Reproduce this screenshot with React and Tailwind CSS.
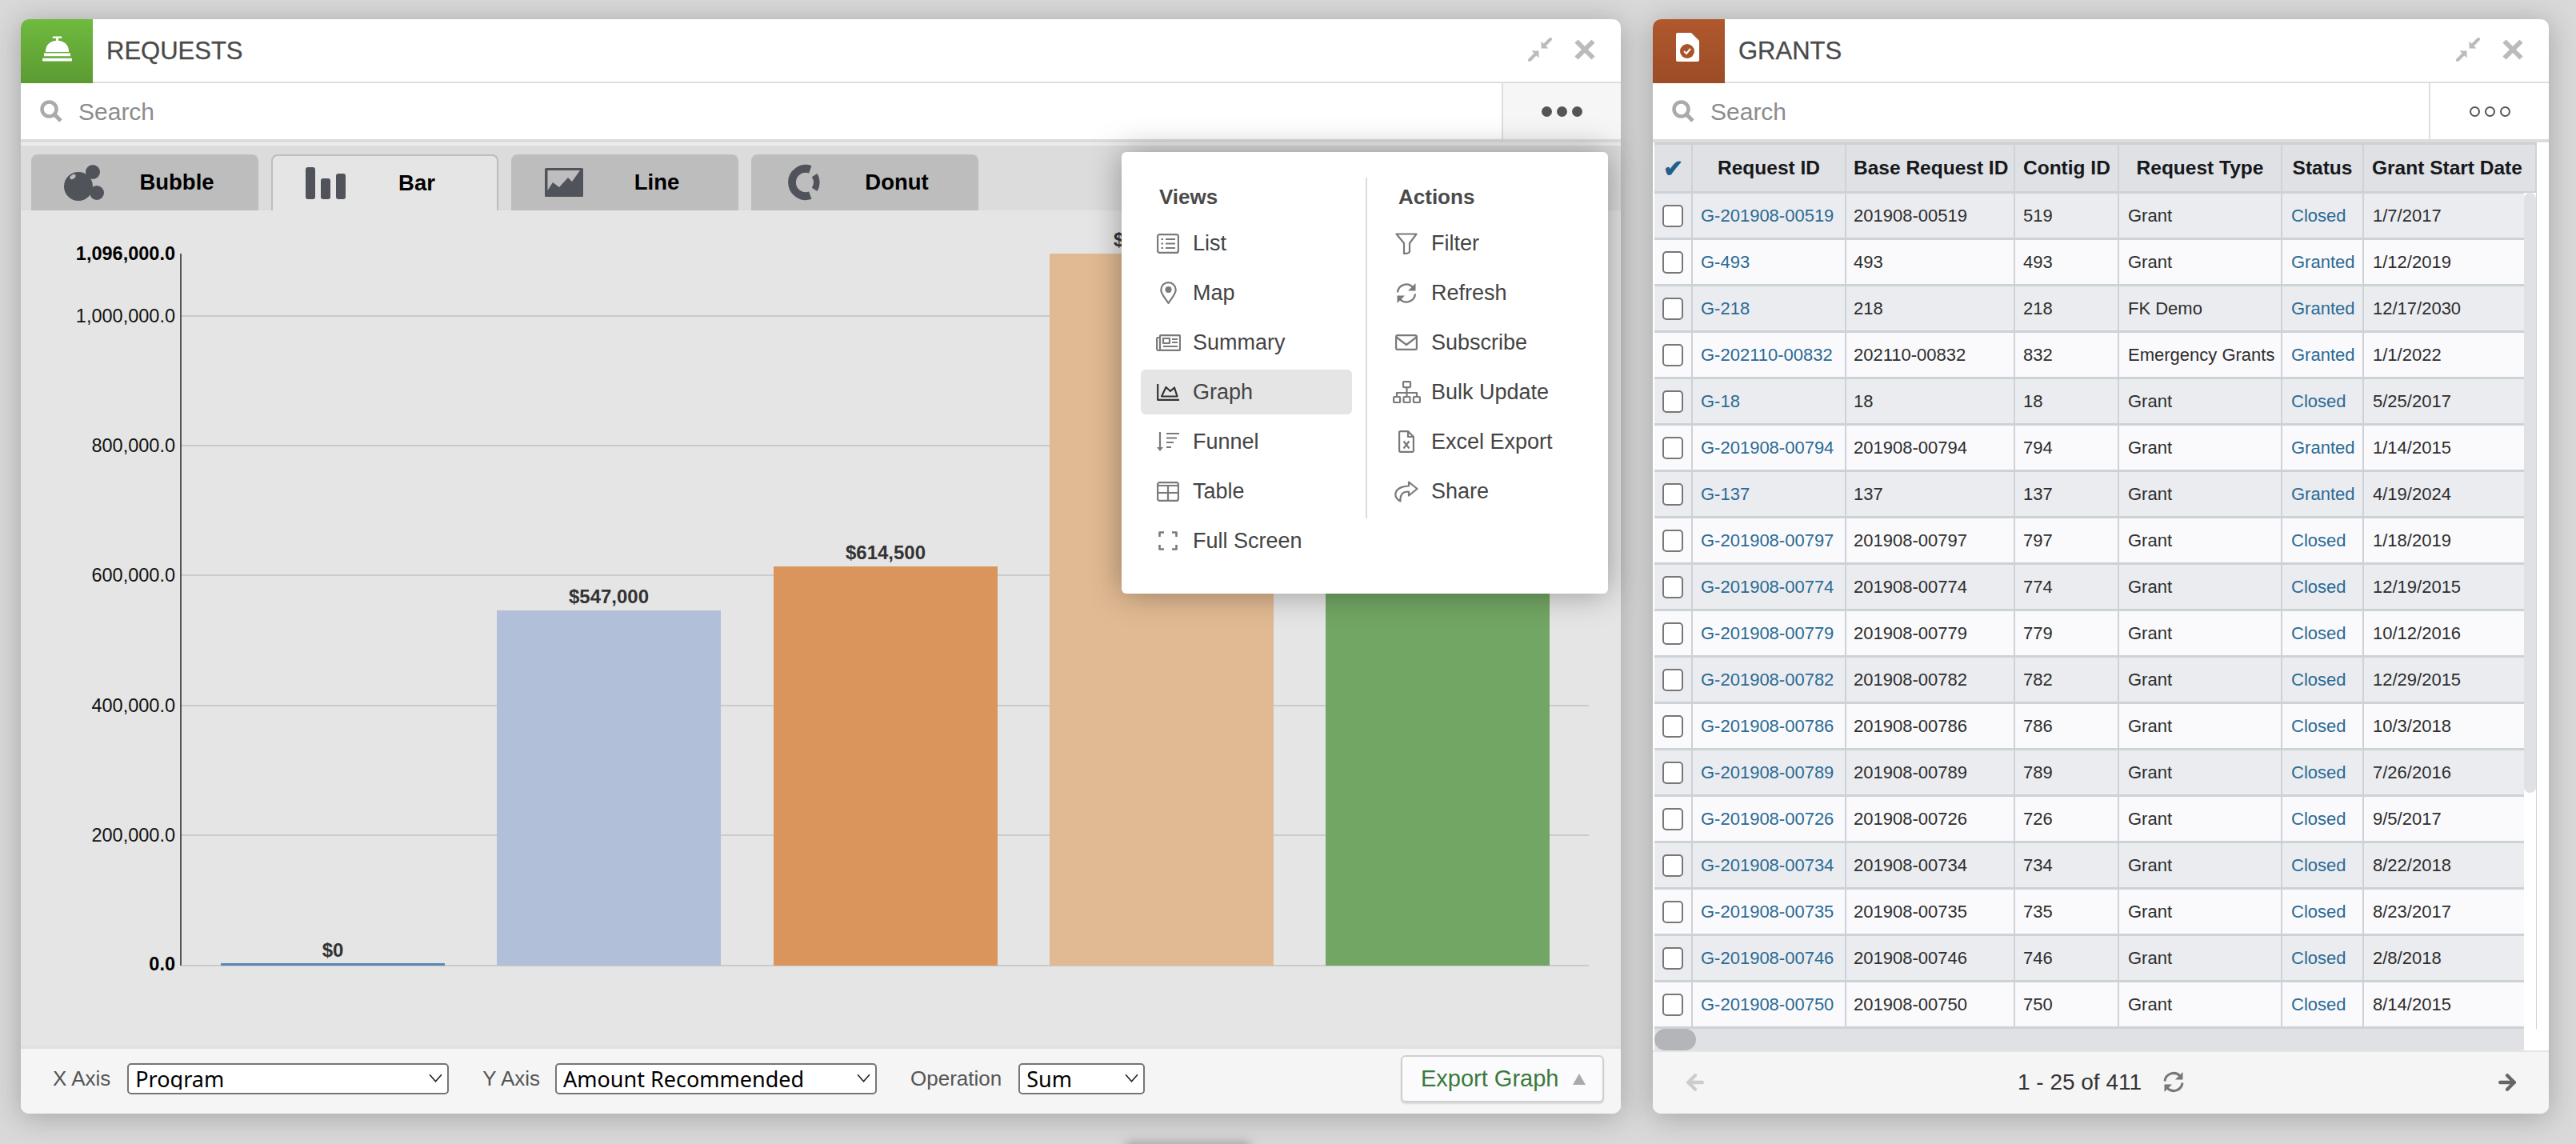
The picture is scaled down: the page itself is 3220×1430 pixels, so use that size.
import { ArrowLeft, ArrowRight } from "lucide-react";

const grants = [
  ["G-201908-00519", "201908-00519", "519", "Grant", "Closed", "1/7/2017"],
  ["G-493", "493", "493", "Grant", "Granted", "1/12/2019"],
  ["G-218", "218", "218", "FK Demo", "Granted", "12/17/2030"],
  ["G-202110-00832", "202110-00832", "832", "Emergency Grants", "Granted", "1/1/2022"],
  ["G-18", "18", "18", "Grant", "Closed", "5/25/2017"],
  ["G-201908-00794", "201908-00794", "794", "Grant", "Granted", "1/14/2015"],
  ["G-137", "137", "137", "Grant", "Granted", "4/19/2024"],
  ["G-201908-00797", "201908-00797", "797", "Grant", "Closed", "1/18/2019"],
  ["G-201908-00774", "201908-00774", "774", "Grant", "Closed", "12/19/2015"],
  ["G-201908-00779", "201908-00779", "779", "Grant", "Closed", "10/12/2016"],
  ["G-201908-00782", "201908-00782", "782", "Grant", "Closed", "12/29/2015"],
  ["G-201908-00786", "201908-00786", "786", "Grant", "Closed", "10/3/2018"],
  ["G-201908-00789", "201908-00789", "789", "Grant", "Closed", "7/26/2016"],
  ["G-201908-00726", "201908-00726", "726", "Grant", "Closed", "9/5/2017"],
  ["G-201908-00734", "201908-00734", "734", "Grant", "Closed", "8/22/2018"],
  ["G-201908-00735", "201908-00735", "735", "Grant", "Closed", "8/23/2017"],
  ["G-201908-00746", "201908-00746", "746", "Grant", "Closed", "2/8/2018"],
  ["G-201908-00750", "201908-00750", "750", "Grant", "Closed", "8/14/2015"],
];

const bars = [
  { x: 276, top: 1204, color: "#5b87b5", label: "$0" },
  { x: 621, top: 763, color: "#b2bfd8", label: "$547,000" },
  { x: 967, top: 708, color: "#d9955c", label: "$614,500" },
  { x: 1312, top: 317, color: "#e1ba93", label: "$1,096,000" },
  { x: 1657, top: 560, color: "#72a664", label: "" },
];

const ticks = [
  { y: 395, label: "1,000,000.0" },
  { y: 557, label: "800,000.0" },
  { y: 719, label: "600,000.0" },
  { y: 882, label: "400,000.0" },
  { y: 1044, label: "200,000.0" },
];

// menu icons are drawn 1:1 in px, w and h are the viewBox
function Glyph({ w, h, stroke = "#7a7a7a", children }) {
  return (
    <svg width={w} height={h} viewBox={`0 0 ${w} ${h}`} fill="none" stroke={stroke} strokeWidth="2.2" strokeLinejoin="round">
      {children}
    </svg>
  );
}

function RefreshGlyph({ w = 28, h = 27, stroke = "#7a7a7a", sw = 2.4 }) {
  return (
    <svg width={w} height={h} viewBox="0 0 28 27" fill="none" stroke={stroke} strokeWidth={sw}>
      <path d="M3 12.500A11 11 0 0 1 22 6" />
      <path d="M25.500 1v9.500H16z" fill={stroke} stroke="none" />
      <path d="M25 14.500A11 11 0 0 1 6 21" />
      <path d="M2.500 26v-9.500H12z" fill={stroke} stroke="none" />
    </svg>
  );
}

function BellIcon() {
  return (
    <svg viewBox="0 0 38 32" className="w-[37px] h-[32px]" fill="#fff">
      <rect x="13" y="0" width="12" height="2.500" rx="1" />
      <rect x="17.500" y="2" width="3" height="4" />
      <path d="M4 20C4 11 10 5.500 19 5.500S34 11 34 20z" />
      <rect x="2" y="21.500" width="34" height="4" />
      <rect x="0" y="28" width="38" height="4" rx="1" />
    </svg>
  );
}

function GrantIcon() {
  return (
    <svg viewBox="0 0 29 36" className="w-[29px] h-[36px]">
      <path d="M2 0h17l10 10v24a2 2 0 0 1-2 2H2a2 2 0 0 1-2-2V2a2 2 0 0 1 2-2z" fill="#fff" />
      <circle cx="14" cy="23" r="9" fill="#a9552b" />
      <path d="M10 23l3 3 5-6" fill="none" stroke="#fff" strokeWidth="2" />
    </svg>
  );
}

function CollapseIcon() {
  return (
    <svg viewBox="0 0 30 30" className="w-[30px] h-[30px]" fill="#bbb" stroke="#bbb">
      <path d="M2 28l7-7" strokeWidth="4" strokeLinecap="round" />
      <path d="M28 2l-7 7" strokeWidth="4" strokeLinecap="round" />
      <path d="M13.500 16.500H4.500L13.500 25.500z" stroke="none" />
      <path d="M16.500 13.500H25.500L16.500 4.500z" stroke="none" />
    </svg>
  );
}

function CloseIcon() {
  return (
    <svg viewBox="0 0 26 26" className="w-[26px] h-[26px]" stroke="#bbb" strokeWidth="6">
      <path d="M2.500 2.500l21 21M23.500 2.500l-21 21" />
    </svg>
  );
}

function SearchGlyph() {
  return (
    <svg viewBox="0 0 28 28" className="w-[28px] h-[28px]" fill="none" stroke="#aaa">
      <circle cx="11.500" cy="11.500" r="9" strokeWidth="4.500" />
      <path d="M18 18l8 8" strokeWidth="5" />
    </svg>
  );
}

function PanelHeader({ title, icon, iconClass }) {
  return (
    <div className="flex h-[80px] border-b-2 border-[#dedede]">
      <div className={`w-[90px] h-[80px] flex items-center justify-center ${iconClass}`}>{icon}</div>
      <div className="flex-1 pl-[17px] pt-[2px] text-[31px] text-[#4a4a4a] [-webkit-text-stroke:0.3px] flex items-center">{title}</div>
      <div className="flex items-center gap-[28px] pr-[32px] pb-[2px]">
        <CollapseIcon />
        <CloseIcon />
      </div>
    </div>
  );
}

function SearchRow({ moreClass, dots }) {
  return (
    <div className="flex h-[74px] border-b-4 border-[#dcdcdc] bg-white">
      <div className="flex-1 flex items-center pl-[24px] gap-[20px]">
        <SearchGlyph />
        <span className="text-[30px] text-[#8c8c8c]">Search</span>
      </div>
      <div className={`${moreClass} border-l-2 border-[#dedede] flex items-center justify-center gap-[6px]`}>{dots}</div>
    </div>
  );
}

function Tab({ label, active, icon }) {
  return (
    <div
      className={`w-[284px] h-[70px] rounded-t-[8px] flex items-center pl-[40px] ${
        active ? "bg-[#e5e5e5] border-2 border-b-0 border-[#bdbdbd]" : "bg-[#bdbdbd]"
      }`}
    >
      <div className="w-[52px] flex justify-center">{icon}</div>
      <span className="flex-1 text-center pr-[12px] text-[27.5px] font-bold text-black">{label}</span>
    </div>
  );
}

function BarChart() {
  return (
    <svg viewBox="26 263 2000 1044" className="w-[2000px] h-[1044px] block" fontFamily="'Liberation Sans', Arial, sans-serif" fontSize="24">
      {ticks.map((t) => (
        <g key={t.y}>
          <line x1="227" x2="1986" y1={t.y} y2={t.y} stroke="#cbcbcb" strokeWidth="2" />
          <text x="219" y={t.y + 8} textAnchor="end" fill="#111" fontSize="23.5">{t.label}</text>
        </g>
      ))}
      <line x1="227" x2="1986" y1="1207" y2="1207" stroke="#cbcbcb" strokeWidth="2" />
      <line x1="226" x2="226" y1="317" y2="1207" stroke="#555" strokeWidth="2" />
      <text x="219" y="325" textAnchor="end" fontWeight="700" fill="#000" fontSize="23.5">1,096,000.0</text>
      <text x="219" y="1213" textAnchor="end" fontWeight="700" fill="#000" fontSize="23.5">0.0</text>
      {bars.map((b) => (
        <g key={b.x}>
          <rect x={b.x} y={b.top} width="280" height={1207 - b.top} fill={b.color} />
          <text x={b.x + 140} y={b.top === 1204 ? b.top - 8 : b.top - 9} textAnchor="middle" fontWeight="700" fill="#333">{b.label}</text>
        </g>
      ))}
    </svg>
  );
}

function SelectBox({ value, width }) {
  return (
    <div className={`relative ${width} h-[39px]`}>
      <select
        defaultValue={value}
        className="appearance-none w-full h-full bg-white border-2 border-[#767676] rounded-[5px] pl-[8px] text-[27px] leading-none text-black font-['Noto_Sans',sans-serif]"
      >
        <option>{value}</option>
      </select>
      <svg viewBox="0 0 16 10" className="absolute right-[8px] top-[13px] w-[17px] h-[11px]" fill="none" stroke="#222" strokeWidth="1.5">
        <path d="M1 1l7 8 7-8" />
      </svg>
    </div>
  );
}

function MenuRow({ icon, label, active }) {
  return (
    <div className={`h-[56px] mb-[6px] flex items-center rounded-[6px] ${active ? "bg-[#e5e5e5]" : ""}`}>
      <div className="w-[65px] pl-[3px] flex justify-center">{icon}</div>
      <span className="text-[27px] text-[#444]">{label}</span>
    </div>
  );
}

const viewItems = [
  {
    label: "List",
    icon: (
      <Glyph w={28} h={25}>
        <rect x="1.100" y="1.100" width="25.800" height="22.800" rx="2.500" />
        <path d="M11 7h12M11 12.500h12M11 18h12M5.500 7h2.500M5.500 12.500h2.500M5.500 18h2.500" />
      </Glyph>
    ),
  },
  {
    label: "Map",
    icon: (
      <Glyph w={21} h={28}>
        <path d="M10.500 27C6 20 1.300 15.500 1.300 10.300a9.200 9.200 0 0 1 18.400 0c0 5.200-4.700 9.700-9.200 16.700z" />
        <circle cx="10.500" cy="10" r="4" fill="#7a7a7a" stroke="none" />
      </Glyph>
    ),
  },
  {
    label: "Summary",
    icon: (
      <Glyph w={31} h={21}>
        <rect x="5" y="1.100" width="25" height="18.800" rx="1" />
        <path d="M5 4H2.500a1.400 1.400 0 0 0-1.400 1.400V18a2 2 0 0 0 2 2H5" />
        <rect x="9" y="5" width="8" height="6" />
        <path d="M20 6h7M20 10h7M9 15h18" />
      </Glyph>
    ),
  },
  {
    label: "Graph",
    active: true,
    icon: (
      <Glyph w={28} h={21} stroke="#333">
        <path d="M1.200 0v19.800H28" />
        <path d="M6 15.500L11.500 4l5.500 5 5-4.500 3.500 11z" />
      </Glyph>
    ),
  },
  {
    label: "Funnel",
    icon: (
      <svg width="28" height="24" viewBox="0 0 28 24" fill="none" stroke="#7a7a7a" strokeWidth="2.2">
        <path d="M4 0v20" />
        <path d="M0 19h8l-4 5z" fill="#7a7a7a" stroke="none" />
        <path d="M12 2h16M12 7.500h13M12 13h9M12 19h6" />
      </svg>
    ),
  },
  {
    label: "Table",
    icon: (
      <Glyph w={28} h={25}>
        <rect x="1.100" y="1.100" width="25.800" height="22.800" rx="2.500" />
        <path d="M1 5h26M1 14h26M14 5v19" />
      </Glyph>
    ),
  },
  {
    label: "Full Screen",
    icon: (
      <Glyph w={24} h={24}>
        <path d="M1.500 7V1.500H7M17 1.500h5.500V7M22.500 17v5.500H17M7 22.500H1.500V17" strokeWidth="2.6" />
      </Glyph>
    ),
  },
];

const actionItems = [
  {
    label: "Filter",
    icon: (
      <Glyph w={28} h={27}>
        <path d="M1.500 1.500h25L18 13v10c0 1.800-3 3-7 3V13z" />
      </Glyph>
    ),
  },
  { label: "Refresh", icon: <RefreshGlyph /> },
  {
    label: "Subscribe",
    icon: (
      <Glyph w={28} h={20}>
        <rect x="1.100" y="1.100" width="25.800" height="17.800" rx="2" />
        <path d="M1.500 3.500L14 13l12.500-9.500" />
      </Glyph>
    ),
  },
  {
    label: "Bulk Update",
    icon: (
      <Glyph w={35} h={28}>
        <rect x="13" y="1.100" width="9" height="7" rx="1" />
        <rect x="1.100" y="20" width="8" height="7" rx="1" />
        <rect x="13.500" y="20" width="8" height="7" rx="1" />
        <rect x="25.900" y="20" width="8" height="7" rx="1" />
        <path d="M17.500 8v12M5 20v-5h25v5" />
      </Glyph>
    ),
  },
  {
    label: "Excel Export",
    icon: (
      <Glyph w={20} h={28}>
        <path d="M1.100 2.500a1.400 1.400 0 0 1 1.400-1.400H12L18.900 8v17.500a1.400 1.400 0 0 1-1.400 1.400h-15a1.400 1.400 0 0 1-1.400-1.400z" />
        <path d="M12 1.100V8h6.900M6.500 13.500l7 9M13.500 13.500l-7 9" />
      </Glyph>
    ),
  },
  {
    label: "Share",
    icon: (
      <Glyph w={30} h={27}>
        <path d="M18 1.500L28.500 10 18 18.500V13.500c-6 0-11 1.500-10.500 12C3 23 0 19 2 14c2-5 9-7.500 16-7.500z" />
      </Glyph>
    ),
  },
];

function PopupMenu() {
  return (
    <div className="absolute left-[1376px] top-[166px] w-[608px] h-[552px] bg-white rounded-[6px] shadow-[0_0_40px_rgba(0,0,0,0.35)] flex pt-[32px] pl-[24px]">
      <div className="w-[264px]">
        <div className="h-[48px] pl-[23px] flex items-center text-[26px] font-bold text-[#4a4a4a] mb-[6px]">Views</div>
        {viewItems.map((item) => (
          <MenuRow key={item.label} {...item} />
        ))}
      </div>
      <div className="ml-[17px] w-[2px] h-[426px] bg-[#dcdcdc]" />
      <div className="ml-[4px] w-[290px]">
        <div className="h-[48px] pl-[35px] flex items-center text-[26px] font-bold text-[#4a4a4a] mb-[6px]">Actions</div>
        <div className="pl-[11px]">
          {actionItems.map((item) => (
            <MenuRow key={item.label} {...item} />
          ))}
        </div>
      </div>
    </div>
  );
}

function RequestsPanel() {
  return (
    <div className="relative w-[2000px] h-[1368px] bg-white rounded-[10px] shadow-[0_4px_36px_rgba(0,0,0,0.25)] flex flex-col">
      <PanelHeader
        title="REQUESTS"
        iconClass="rounded-tl-[10px] bg-gradient-to-b from-[#6fba3f] to-[#5c9a32] pb-[6px]"
        icon={<BellIcon />}
      />
      <SearchRow
        moreClass="w-[149px] bg-[#f6f6f6]"
        dots={
          <>
            <span className="w-[13px] h-[13px] rounded-full bg-[#555]" />
            <span className="w-[13px] h-[13px] rounded-full bg-[#555]" />
            <span className="w-[13px] h-[13px] rounded-full bg-[#555]" />
          </>
        }
      />
      <div className="h-[85px] pt-[11px] pl-[13px] bg-[#dcdcdc] border-t-4 border-[#ececec] flex gap-[16px]">
        <Tab
          label="Bubble"
          icon={
            <svg viewBox="0 0 50 46" className="w-[50px] h-[46px]" fill="#50535a">
              <circle cx="18" cy="28" r="18" />
              <circle cx="36" cy="10" r="9" />
              <circle cx="41" cy="36" r="9" />
              <ellipse cx="11" cy="16" rx="4" ry="2.5" fill="#bdbdbd" transform="rotate(-35 11 16)" />
            </svg>
          }
        />
        <Tab
          label="Bar"
          active
          icon={
            <svg viewBox="0 0 50 40" className="w-[50px] h-[40px]" fill="#50535a">
              <rect x="0" y="0" width="12" height="40" rx="3" />
              <rect x="19" y="14" width="12" height="26" rx="3" />
              <rect x="38" y="8" width="12" height="32" rx="3" />
            </svg>
          }
        />
        <Tab
          label="Line"
          icon={
            <svg viewBox="0 0 48 36" className="w-[48px] h-[36px]">
              <rect x="0" y="0" width="48" height="36" rx="1.5" fill="#50535a" />
              <path d="M3.500 3H44L34 17l-5-5-11 12-8-6-6.500 10z" fill="#bdbdbd" />
            </svg>
          }
        />
        <Tab
          label="Donut"
          icon={
            <svg viewBox="0 0 46 46" className="w-[45px] h-[46px]" fill="none" stroke="#50535a" strokeWidth="10">
              <path d="M30.500 6.500A17.500 17.500 0 1 0 30.500 39.500" />
              <path d="M36 14A17 17 0 0 1 36 32" strokeWidth="8" />
            </svg>
          }
        />
      </div>
      <div className="flex-1 bg-[#e5e5e5] overflow-hidden">
        <BarChart />
      </div>
      <div className="h-[85px] rounded-b-[10px] border-t-4 border-[#e0e0e0] bg-[#f5f5f5] flex items-center pl-[40px] pr-[21px] pb-[6px] text-[26px] text-[#555]">
        <span>X Axis</span>
        <div className="ml-[21px]">
          <SelectBox value="Program" width="w-[402px]" />
        </div>
        <span className="ml-[42px]">Y Axis</span>
        <div className="ml-[19px]">
          <SelectBox value="Amount Recommended" width="w-[402px]" />
        </div>
        <span className="ml-[42px]">Operation</span>
        <div className="ml-[21px]">
          <SelectBox value="Sum" width="w-[158px]" />
        </div>
        <div className="ml-auto w-[254px] h-[59px] border-2 border-[#cfcfcf] rounded-[6px] bg-[#fbfbfd] shadow-[0_2px_2px_rgba(0,0,0,0.12)] flex items-center pl-[23px]">
          <span className="text-[29px] text-[#3a7a3a]">Export Graph</span>
          <span className="ml-[18px] w-0 h-0 border-l-[8px] border-r-[8px] border-b-[14px] border-l-transparent border-r-transparent border-b-[#aaa]" />
        </div>
      </div>
      <PopupMenu />
    </div>
  );
}

function Cell({ className = "", children }) {
  return <td className={`border-r-2 border-b-[3px] border-[#ccd2d6] px-[13px] whitespace-nowrap overflow-hidden ${className}`}>{children}</td>;
}

function GrantsPanel() {
  return (
    <div className="w-[1120px] h-[1368px] bg-white rounded-[10px] shadow-[0_4px_36px_rgba(0,0,0,0.25)] flex flex-col">
      <PanelHeader
        title="GRANTS"
        iconClass="rounded-tl-[10px] bg-gradient-to-b from-[#b0582e] to-[#9c4c26] pb-[10px] pr-[3px]"
        icon={<GrantIcon />}
      />
      <SearchRow
        moreClass="w-[150px]"
        dots={
          <>
            <span className="w-[13px] h-[13px] rounded-full border-[2.5px] border-[#555]" />
            <span className="w-[13px] h-[13px] rounded-full border-[2.5px] border-[#555]" />
            <span className="w-[13px] h-[13px] rounded-full border-[2.5px] border-[#555]" />
          </>
        }
      />
      <div className="relative h-[1135px] pl-[2px] pr-[16px] overflow-hidden">
        <table className="table-fixed w-[1102px] border-collapse text-[22px] text-[#2d2d2d] border-t-[3px] border-[#ccd2d6]">
          <colgroup>
            <col className="w-[47px]" />
            <col className="w-[192px]" />
            <col className="w-[211px]" />
            <col className="w-[130px]" />
            <col className="w-[204px]" />
            <col className="w-[102px]" />
            <col className="w-[216px]" />
          </colgroup>
          <thead>
            <tr className="h-[61px] bg-[#dfe1e5] text-[24.5px] text-[#16181b] font-bold">
              <Cell className="text-center !px-0 text-[#1f5f8b] text-[30px]">✔</Cell>
              <Cell className="text-center !px-0">Request ID</Cell>
              <Cell className="!px-[9px]">Base Request ID</Cell>
              <Cell className="!px-[10px]">Contig ID</Cell>
              <Cell className="text-center !px-0">Request Type</Cell>
              <Cell className="text-center !px-0">Status</Cell>
              <Cell className="!px-[10px]">Grant Start Date</Cell>
            </tr>
          </thead>
          <tbody>
            {grants.map((row, i) => (
              <tr key={row[0]} className={`h-[58px] ${i % 2 === 0 ? "bg-[#eaecf0]" : "bg-[#fafafc]"}`}>
                <Cell className="!px-0">
                  <div className="w-[26px] h-[28px] mx-auto bg-white border-2 border-[#777] rounded-[5px]" />
                </Cell>
                <Cell className="text-[#2a6a94] !px-[10px]">{row[0]}</Cell>
                <Cell className="!px-[9px]">{row[1]}</Cell>
                <Cell className="!px-[10px]">{row[2]}</Cell>
                <Cell className="!px-[11px]">{row[3]}</Cell>
                <Cell className="text-[#2a6a94] !px-[11px]">{row[4]}</Cell>
                <Cell className="!px-[11px]">{row[5]}</Cell>
              </tr>
            ))}
          </tbody>
        </table>
        {/* scrollbars sit over the table */}
        <div className="absolute left-[1089px] top-[63px] w-[15px] bottom-0 bg-white">
          <div className="h-[750px] bg-[#dfe1e5] rounded-[7px]" />
        </div>
        <div className="absolute left-[2px] bottom-0 w-[1087px] h-[27px] bg-[#dfe1e5]">
          <div className="w-[52px] h-[27px] rounded-full bg-[#b3b5b9]" />
        </div>
      </div>
      <div className="h-[79px] rounded-b-[10px] bg-[#f5f5f5] border-t-2 border-[#e5e5e5] flex items-center justify-between pl-[38px] pr-[37px] pb-[2px]">
        <ArrowLeft size={30} color="#ccc" strokeWidth={3.5} />
        <div className="flex items-center gap-[26px] text-[28px] text-[#333]">
          <span>1 - 25 of 411</span>
          <RefreshGlyph stroke="#777" sw={3} />
        </div>
        <ArrowRight size={30} color="#666" strokeWidth={3.5} />
      </div>
    </div>
  );
}

export default function App() {
  return (
    <div className="relative w-[3220px] h-[1430px] overflow-hidden bg-[#d9d9d9] font-['Liberation_Sans',Arial,sans-serif]">
      <div className="flex gap-[40px] pl-[26px] pt-[24px]">
        <RequestsPanel />
        <GrantsPanel />
      </div>
      <div className="absolute left-[1405px] top-[1426px] w-[160px] h-[20px] rounded-full bg-[#aaa] blur-[6px]" />
    </div>
  );
}
